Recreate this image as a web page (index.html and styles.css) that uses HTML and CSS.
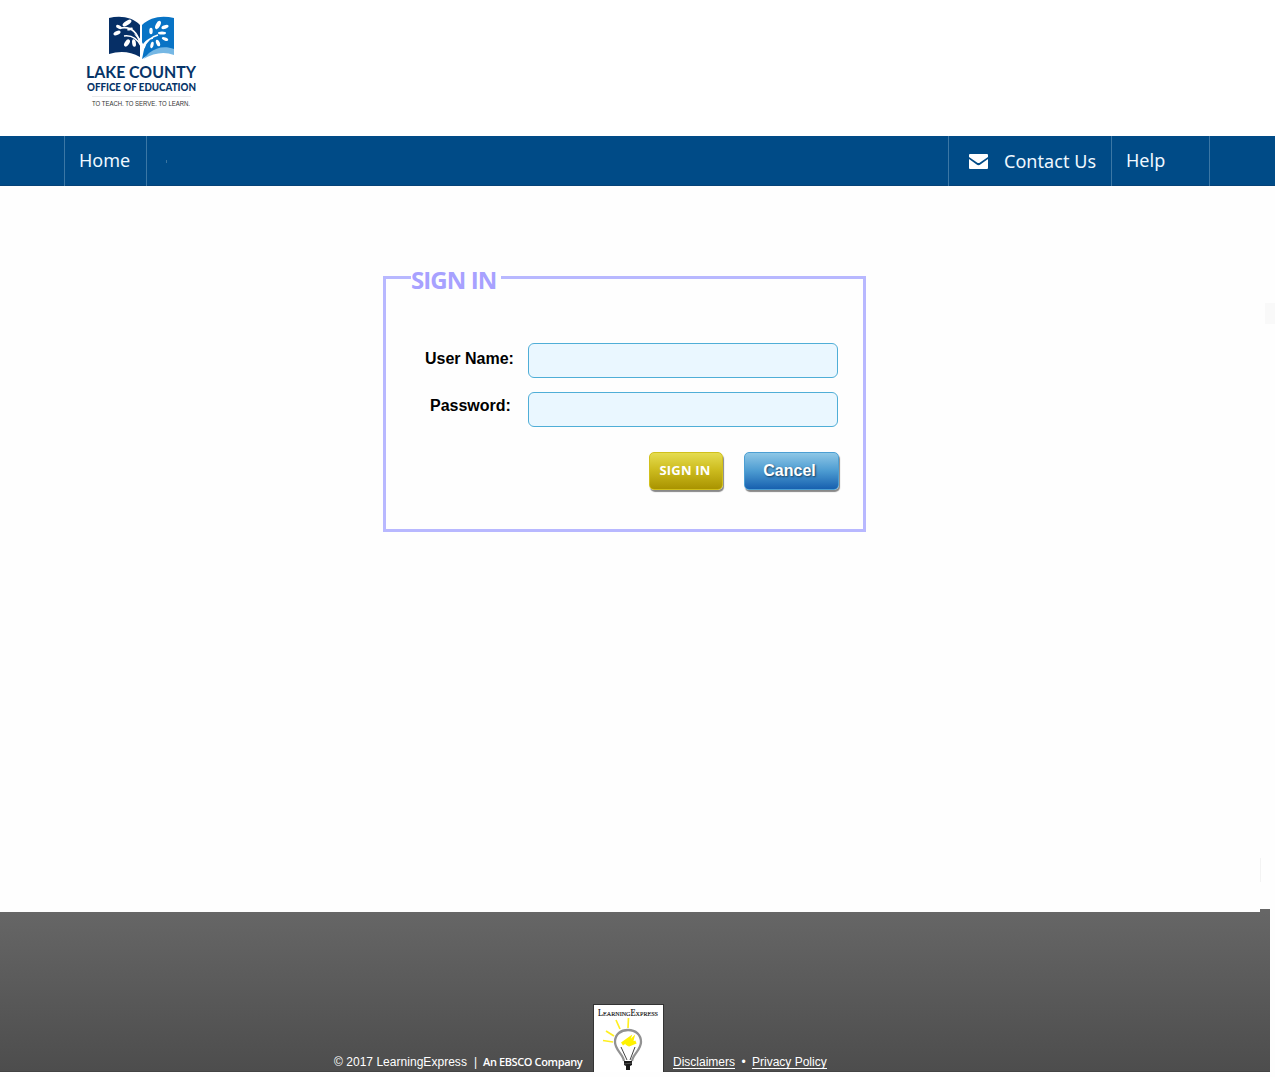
FILE: index.html
```html
<!DOCTYPE html>
<html lang="en">
<head>
<meta charset="utf-8">
<title>Sign In</title>
<link rel="stylesheet" href="styles.css">
</head>
<body>
<header class="header">
  <svg class="logo" viewBox="0 0 112 95" role="img" aria-label="Lake County Office of Education">
    <path d="M24 3C35 0 48 2 55 10V42C45 36 34 36 24 39Z" fill="#062f66"/>
    <path d="M57 10C65 2 77 0 89 3V39C76 36 65 38 57 44Z" fill="#0873c5"/>
    <path d="M64 38C72 32 80 31 89 34V40C79 36 69 38 58 44Z" fill="#75b7e4"/>
    <path d="M36 13C46 11 52 18 55 27M39 21C47 20 52 23 56 31M73 20C66 22 61 25 59 33M68 23C63 24 60 26 58 32" fill="none" stroke="#fff" stroke-width="1.5"/>
    <path d="M49 19C55 25 56 31 56 44H57C59 36 59 31 63 26L61 26L58 29C56 25 54 21 49 19Z" fill="#fff"/>
    <g fill="#fff">
      <ellipse cx="42" cy="8" rx="5" ry="2.2" transform="rotate(-32 42 8)"/><ellipse cx="34" cy="12" rx="3.2" ry="1.7" transform="rotate(25 34 12)"/>
      <ellipse cx="32" cy="18" rx="3.8" ry="1.9" transform="rotate(-25 32 18)"/><ellipse cx="45" cy="14" rx="3" ry="1.2" transform="rotate(-20 45 14)"/>
      <ellipse cx="42" cy="28" rx="2.2" ry="4" transform="rotate(35 42 28)"/><ellipse cx="49" cy="28" rx="1.9" ry="3.8" transform="rotate(-8 49 28)"/>
      <ellipse cx="66" cy="16" rx="1.7" ry="3.2"/><ellipse cx="73" cy="10" rx="2.2" ry="4.5" transform="rotate(28 73 10)"/>
      <ellipse cx="80" cy="12" rx="3.7" ry="1.8" transform="rotate(-18 80 12)"/><ellipse cx="77" cy="18" rx="4" ry="1.5"/>
      <ellipse cx="73" cy="28" rx="1.8" ry="3.5" transform="rotate(-22 73 28)"/><ellipse cx="67" cy="30" rx="1.6" ry="3.2" transform="rotate(12 67 30)"/>
      <ellipse cx="80" cy="24" rx="3.3" ry="1.5" transform="rotate(20 80 24)"/>
    </g>
    <text class="logo-name" x="1" y="62.5" textLength="110" lengthAdjust="spacingAndGlyphs">LAKE COUNTY</text>
    <text class="logo-office" x="2" y="75.5" textLength="109" lengthAdjust="spacingAndGlyphs">OFFICE OF EDUCATION</text>
    <path d="M7 81.5H106" stroke="#e9e9e9"/>
    <text class="logo-motto" x="7" y="91" textLength="98" lengthAdjust="spacingAndGlyphs">TO TEACH. TO SERVE. TO LEARN.</text>
  </svg>
</header>
<nav class="nav">
  <a class="nav-home">Home</a>
  <span class="nav-mark"></span>
  <a class="nav-contact">
    <svg class="mail" viewBox="0 0 19 15"><path d="M1 0H18Q19 0 19 1V3L11 8.5Q9.5 9.5 8 8.5L0 3V1Q0 0 1 0ZM0 5L7.3 10.3Q9.5 12 11.7 10.3L19 5V14Q19 15 18 15H1Q0 15 0 14Z" fill="#fff"/></svg>
    <span>Contact Us</span>
  </a>
  <a class="nav-help">Help</a>
</nav>
<main class="main">
  <form class="panel">
    <h1 class="title">SIGN IN</h1>
    <div class="row"><label class="label" for="user">User Name:</label><input class="input" id="user" type="text"></div>
    <div class="row"><label class="label label-password" for="pass">Password:</label><input class="input" id="pass" type="password"></div>
    <div class="actions">
      <button class="button button-signin" type="button">SIGN IN</button>
      <button class="button button-cancel" type="button">Cancel</button>
    </div>
  </form>
  <span class="edge-mark"></span>
  <span class="edge-line"></span>
</main>
<footer class="footer">
  <span class="copyright">© 2017 LearningExpress</span>
  <span class="bar">|</span>
  <span class="company">An EBSCO Company</span>
  <svg class="bulb" viewBox="0 0 71 68">
    <path d="M0 0H71V68H0Z" fill="#333"/><path d="M1 1H70V68H1Z" fill="#fff"/>
    <text class="bulb-name" x="5" y="12" textLength="60" lengthAdjust="spacingAndGlyphs">LearningExpress</text>
    <path d="M23 16L27 25M35.500 14L35 24M13 27L21 32M10 36.500L20 38" stroke="#ffef20" stroke-width="1.7" fill="none"/>
    <path d="M31 57C30 50 22 46 22 38C22 30 28 26 35 26C43 26 48 31 48 38C48 46 40 50 39 57" fill="none" stroke="#929292" stroke-width="2.3"/>
    <path d="M28 43L34 56M42 43L37 56" fill="none" stroke="#444" stroke-width="1"/>
    <path d="M29 40L36 35L34 41L39 36L38 40L43 38" fill="none" stroke="#fff200" stroke-width="3.4"/>
    <path d="M31 57H39V61L37 62V66H33V62L31 61Z" fill="#181818"/><path d="M31 60L39 59" stroke="#777" stroke-width=".6"/>
  </svg>
  <a class="link disclaimers">Disclaimers</a>
  <span class="dot">•</span>
  <a class="link privacy">Privacy Policy</a>
  <span class="footer-edge"></span>
</footer>
</body>
</html>
```
FILE: styles.css
```css
* { box-sizing: border-box; }
body { margin: 0; width: 1275px; height: 1077px; overflow: hidden; background: #fefefe; font-family: "Liberation Sans", Arial, sans-serif; }
.header { height: 136px; padding: 15px 0 0 85px; background: #fff; }
.logo { display: block; width: 112px; height: 95px; overflow: visible; }
.logo-name { font: bold 17.5px Lato, sans-serif; fill: #063468; }
.logo-office { font: 900 10.5px Lato, sans-serif; fill: #063468; }
.logo-motto { font: 6.6px "Liberation Sans", sans-serif; fill: #333; }
.nav { display: flex; height: 50px; padding-left: 64px; background: linear-gradient(#004b87 49px, #064378 49px); color: #eff8ff; font: 18px/49px "Noto Sans", sans-serif; }
.nav-home { width: 83px; padding-left: 14px; border: solid #3b77a5; border-width: 0 1px; }
.nav-mark { width: 1px; height: 3px; margin: 24px 781px 0 19px; background: #3974a0; }
.nav-contact { display: flex; width: 163px; padding: 1px 0 0 20px; gap: 16px; border-left: 1px solid #3b77a5; letter-spacing: .05px; }
.mail { width: 19px; height: 15px; margin-top: 17px; }
.nav-help { width: 99px; padding-left: 14px; border: solid #3b77a5; border-width: 0 1px; }
.main { position: relative; height: 726px; padding: 90px 0 0 383px; }
.panel { width: 483px; height: 256px; border: 3px solid #b8b8ff; }
.title { width: 90px; height: 32px; margin: -15px 0 47px 25px; background: #fefefe; color: #a7a1ff; font: bold 24px/32px "Open Sans", sans-serif; letter-spacing: -.9px; white-space: nowrap; }
.row { display: flex; height: 35px; margin-bottom: 14px; padding-left: 39px; }
.label { width: 103px; font: bold 16px/31px "Liberation Sans", Arial, sans-serif; color: #000; }
.label-password { padding-left: 5px; line-height: 27px; }
.input { width: 310px; height: 35px; border: 1px solid #4faed7; border-radius: 6px; background: #eaf7ff; padding: 0 8px; }
.actions { display: flex; gap: 20px; padding: 11px 0 0 263px; }
.button { height: 38px; padding: 0; border-radius: 5px; color: #fff; box-shadow: 1px 2px 1px #888; }
.button-signin { width: 74px; border: 1px solid #d1c01c; background: linear-gradient(#e5dc50, #cebd20 45%, #a99300); font: bold 13px/34px "Open Sans", sans-serif; letter-spacing: .2px; padding: 0 2px 2px 0; }
.button-cancel { width: 95px; margin-left: 1px; border: 1px solid #4c9fd3; background: linear-gradient(#8ec7e6, #4c9bd1 50%, #1760af); font: bold 16px/34px "Liberation Sans", Arial, sans-serif; text-shadow: 1px 1px 2px #173b5c; padding: 0 4px 1px 0; }
.edge-mark { position: absolute; right: 0; top: 117px; width: 10px; height: 21px; background: #f9f9f9; }
.edge-line { position: absolute; right: 14px; top: 672px; width: 1px; height: 24px; background: #f3f3f3; }
.footer { position: relative; display: flex; align-items: flex-end; width: 1270px; height: 160px; padding-left: 334px; background: linear-gradient(#666, #4d4d4d); border-bottom: 1px solid #444; color: #fff; font-size: 12px; line-height: 14px; white-space: nowrap; }
.copyright { width: 140px; margin-bottom: 2px; letter-spacing: .03px; }
.bar { width: 9px; margin-bottom: 2px; }
.company { width: 110px; margin-bottom: 2px; font: 600 11px/15px "Open Sans", sans-serif; letter-spacing: -.38px; }
.bulb { width: 71px; height: 68px; margin-bottom: -1px; }
.bulb-name { font: 9.5px "Liberation Serif", serif; font-variant-caps: small-caps; fill: #111; stroke: #111; stroke-width: .15px; }
.link { height: 14px; margin-bottom: 2px; border-bottom: 1px solid #fff; }
.disclaimers { margin-left: 9px; }
.dot { width: 17px; text-align: center; margin-bottom: 2px; }
.footer-edge { position: absolute; right: 0; top: -3px; width: 10px; height: 3px; background: #666; }
```
